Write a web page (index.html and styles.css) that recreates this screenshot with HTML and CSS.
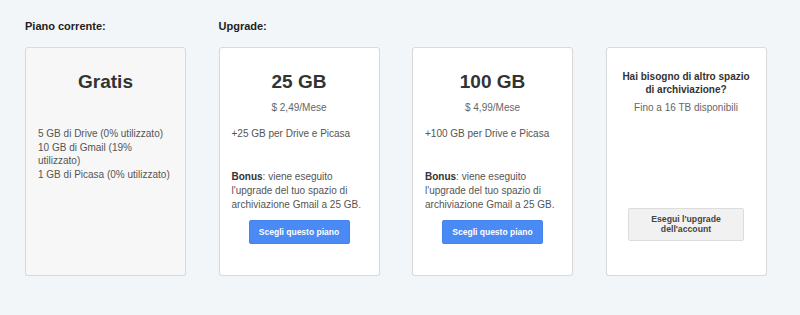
FILE: index.html
```html
<!DOCTYPE html>
<html lang="it">
<head>
    <meta charset="UTF-8">
    <meta name="viewport" content="width=device-width, initial-scale=1.0">
    <title>Piani di archiviazione</title>
    <link rel="stylesheet" href="styles.css">
</head>
<body>
    <div class="plans">
        <div class="plans-label">Piano corrente:</div>
        <div class="plans-label">Upgrade:</div>
        <div></div>
        <div></div>

        <!-- Current plan -->
        <div class="plan-card current">
            <div class="plan-head">
                <div class="plan-title">Gratis</div>
            </div>
            <div class="plan-usage">
                5 GB di Drive (0% utilizzato)<br>
                10 GB di Gmail (19% utilizzato)<br>
                1 GB di Picasa (0% utilizzato)
            </div>
        </div>

        <div class="plan-card">
            <div class="plan-head">
                <div class="plan-title">25 GB</div>
                <div class="plan-price">$ 2,49/Mese</div>
            </div>
            <div class="plan-feature">+25 GB per Drive e Picasa</div>
            <div class="plan-bonus"><span class="bonus-tag">Bonus</span>: viene eseguito l'upgrade del tuo spazio di archiviazione Gmail a 25 GB.</div>
            <button class="choose-btn">Scegli questo piano</button>
        </div>

        <div class="plan-card">
            <div class="plan-head">
                <div class="plan-title">100 GB</div>
                <div class="plan-price">$ 4,99/Mese</div>
            </div>
            <div class="plan-feature">+100 GB per Drive e Picasa</div>
            <div class="plan-bonus"><span class="bonus-tag">Bonus</span>: viene eseguito l'upgrade del tuo spazio di archiviazione Gmail a 25 GB.</div>
            <button class="choose-btn">Scegli questo piano</button>
        </div>

        <!-- More storage -->
        <div class="plan-card more">
            <div class="more-title">Hai bisogno di altro spazio di archiviazione?</div>
            <div class="plan-price">Fino a 16 TB disponibili</div>
            <button class="account-btn">Esegui l'upgrade dell'account</button>
        </div>
    </div>
</body>
</html>
```

FILE: styles.css
```css
body {
    margin: 0;
    padding: 0;
    background: #f3f6f9;
    font-family: "Liberation Sans", Arial, sans-serif;
    color: #555;
}

.plans {
    display: grid;
    grid-template-columns: repeat(4, 161px);
    column-gap: 32.5px;
    row-gap: 14px;
    padding: 20px 0 0 25px;
}

.plans-label {
    font-size: 11px;
    line-height: 13px;
    font-weight: bold;
    color: #222;
}

.plan-card {
    display: flex;
    flex-direction: column;
    box-sizing: border-box;
    height: 229px;
    padding: 23px 12px 31px 12px;
    background: #fff;
    border: 1px solid #d9d9d9;
    border-radius: 3px;
    box-shadow: 0 1px 1px rgba(0, 0, 0, 0.06);
    font-size: 10px;
    line-height: 14px;
}

.plan-card.current {
    background: #f7f7f7;
}

.plan-head {
    height: 56px;
    text-align: center;
}

.plan-title {
    font-size: 19px;
    line-height: 22px;
    font-weight: bold;
    color: #333;
}

.plan-price {
    margin-top: 8px;
    color: #666;
    text-align: center;
}

.plan-usage {
    line-height: 13.7px;
}

.plan-bonus {
    margin-top: 29px;
}

.bonus-tag {
    font-weight: bold;
    color: #333;
}

.choose-btn {
    align-self: center;
    width: 101px;
    height: 24px;
    margin-top: 7.5px;
    padding: 0;
    background: #4a8af4;
    border: 1px solid #4482ec;
    border-radius: 2px;
    color: #fff;
    font-family: "Liberation Sans", Arial, sans-serif;
    font-size: 8.5px;
    font-weight: bold;
    cursor: pointer;
}

.more {
    padding-top: 22px;
    padding-left: 14px;
    padding-right: 14px;
}

.more-title {
    font-weight: bold;
    color: #333;
    line-height: 13px;
    text-align: center;
}

.more .plan-price {
    margin-top: 5px;
}

.account-btn {
    align-self: center;
    width: 116px;
    margin-top: auto;
    margin-bottom: 3px;
    padding: 6px 8px;
    background: #f1f1f1;
    border: 1px solid #dcdcdc;
    border-radius: 2px;
    color: #444;
    font-family: "Liberation Sans", Arial, sans-serif;
    font-size: 8.7px;
    line-height: 9.5px;
    font-weight: bold;
    cursor: pointer;
}
```
